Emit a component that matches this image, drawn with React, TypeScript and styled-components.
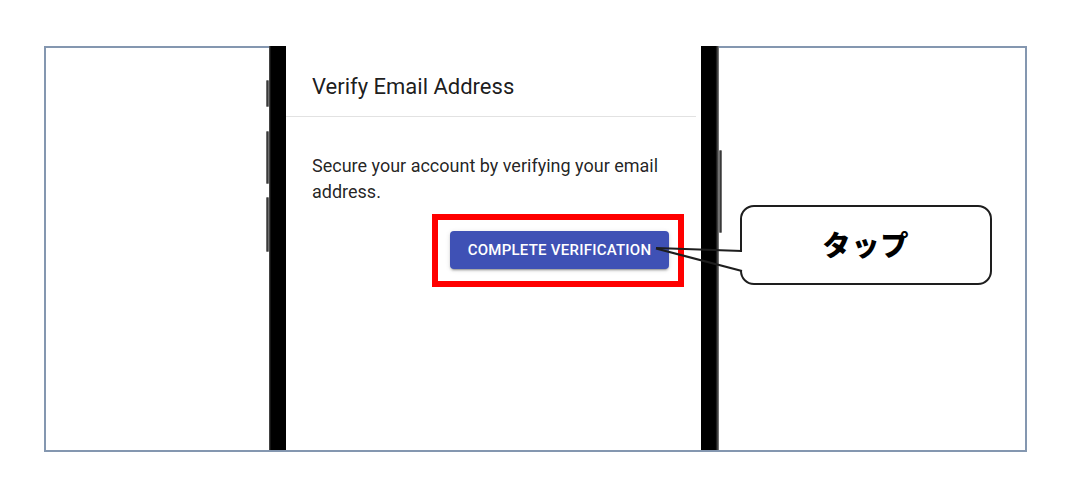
import React from "react";
import styled, { createGlobalStyle } from "styled-components";

const Global = createGlobalStyle`
  html, body { margin: 0; padding: 0; background: #ffffff; }
  body { font-family: Roboto, "Liberation Sans", sans-serif; }
`;

const Page = styled.div`
  position: relative;
  width: 1070px;
  height: 500px;
  padding: 46px 0 0 44px;
  box-sizing: border-box;
`;

const Frame = styled.div`
  width: 983px;
  height: 406px;
  box-sizing: border-box;
  border: 2px solid #8497b0;
  display: flex;
  align-items: flex-start;
`;

const Phone = styled.div`
  position: relative;
  margin-left: 223px;
  margin-top: -2px;
  width: 450px;
  height: 404px;
  display: flex;
`;

const Bezel = styled.div<{ $side: "left" | "right" }>`
  width: ${(p) => (p.$side === "left" ? "17px" : "18px")};
  box-sizing: border-box;
  background: ${(p) =>
    p.$side === "left"
      ? "linear-gradient(to right, #5a5a5a 0px, #2a2a2a 1px, #000 2px, #000 100%)"
      : "linear-gradient(to right, #000 0%, #000 80%, #333 90%, #8a8a8a 100%)"};
`;

const SideButton = styled.div<{ $top: number; $height: number; $side: "left" | "right" }>`
  position: absolute;
  top: ${(p) => p.$top}px;
  height: ${(p) => p.$height}px;
  ${(p) => (p.$side === "left" ? "left: -3px;" : "right: -3px;")}
  width: 3px;
  box-sizing: border-box;
  background: #3a3a3a;
  border: 1px solid #6e6e6e;
  border-radius: 1px;
`;

const Screen = styled.div`
  flex: 1;
  background: #ffffff;
  display: flex;
  flex-direction: column;
`;

const Header = styled.div`
  padding: 24px 26px 13px;
`;

const Title = styled.h2`
  margin: 0;
  font-family: Roboto, "Liberation Sans", sans-serif;
  font-weight: 400;
  font-size: 22px;
  line-height: 33px;
  color: rgba(0, 0, 0, 0.9);
`;

const Divider = styled.div`
  height: 1px;
  background: #e2e2e2;
  margin-right: 5px;
`;

const Body = styled.div`
  padding: 36px 26px 0;
`;

const Message = styled.p`
  margin: 0;
  font-size: 18px;
  line-height: 26px;
  color: rgba(0, 0, 0, 0.87);
`;

const Actions = styled.div`
  display: flex;
  justify-content: flex-end;
  padding: 26px 32px 0 0;
`;

const PrimaryButton = styled.button`
  width: 219px;
  height: 38px;
  padding: 0;
  border: none;
  border-radius: 4px;
  background: #3f51b5;
  color: #ffffff;
  font-family: Roboto, "Liberation Sans", sans-serif;
  font-weight: 500;
  font-size: 15px;
  letter-spacing: 0.25px;
  text-transform: uppercase;
  box-shadow: 0 3px 1px -2px rgba(0, 0, 0, 0.2), 0 2px 2px 0 rgba(0, 0, 0, 0.14),
    0 1px 5px 0 rgba(0, 0, 0, 0.12);
  cursor: pointer;
`;

const Highlight = styled.div`
  position: absolute;
  left: 432px;
  top: 214px;
  width: 252px;
  height: 73px;
  box-sizing: border-box;
  border: 6px solid #ff0000;
  pointer-events: none;
`;

const Callout = styled.div`
  position: absolute;
  left: 740px;
  top: 205px;
  width: 252px;
  height: 80px;
  box-sizing: border-box;
  border: 2.5px solid #1e1e1e;
  border-radius: 14px;
  background: #ffffff;
  display: flex;
  align-items: center;
  justify-content: center;
`;

const CalloutText = styled.span`
  font-family: "Noto Sans CJK JP", "Noto Sans", sans-serif;
  font-weight: 900;
  font-size: 28px;
  color: #000;
  letter-spacing: 1px;
  margin-top: -2px;
`;

const Tail = styled.svg`
  position: absolute;
  left: 0;
  top: 0;
  pointer-events: none;
`;

export default function App() {
  return (
    <>
      <Global />
      <Page>
        <Frame>
          <Phone>
            <SideButton $side="left" $top={34} $height={27} />
            <SideButton $side="left" $top={85} $height={53} />
            <SideButton $side="left" $top={151} $height={55} />
            <SideButton $side="right" $top={104} $height={83} />
            <Bezel $side="left" />
            <Screen>
              <Header>
                <Title>Verify Email Address</Title>
              </Header>
              <Divider />
              <Body>
                <Message>Secure your account by verifying your email address.</Message>
              </Body>
              <Actions>
                <PrimaryButton>Complete Verification</PrimaryButton>
              </Actions>
            </Screen>
            <Bezel $side="right" />
          </Phone>
        </Frame>
        <Highlight />
        <Callout>
          <CalloutText>タップ</CalloutText>
        </Callout>
        <Tail width="1070" height="500" viewBox="0 0 1070 500">
          <rect x="738" y="252" width="6" height="18" fill="#ffffff" />
          <line x1="656" y1="248" x2="742" y2="251" stroke="#1e1e1e" strokeWidth="2.2" />
          <line x1="656" y1="248.5" x2="742" y2="271" stroke="#1e1e1e" strokeWidth="2.2" />
        </Tail>
      </Page>
    </>
  );
}
